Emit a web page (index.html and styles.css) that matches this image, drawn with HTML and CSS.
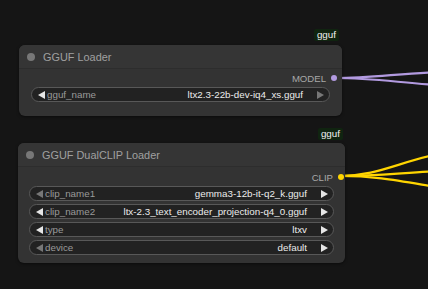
FILE: index.html
```html
<!DOCTYPE html>
<html lang="en">
<head>
    <meta charset="UTF-8">
    <title>Graph</title>
    <link rel="stylesheet" href="styles.css">
</head>
<body>
    <div class="canvas">
        <svg class="links" width="428" height="289" viewBox="0 0 428 289">
            <path class="link link-model" d="M335 78 C 370 78, 395 74, 430 72.5"/>
            <path class="link link-model" d="M335 78 C 370 78, 395 82, 430 84.5"/>
            <path class="link link-clip" d="M339 176 C 375 176, 395 164, 430 156"/>
            <path class="link link-clip" d="M339 176 C 375 176, 400 173, 430 171.5"/>
            <path class="link link-clip" d="M339 176 C 375 176, 395 180, 430 186"/>
        </svg>

        <div class="node node-loader">
            <div class="badge">gguf</div>
            <div class="node-title">
                <span class="title-dot"></span>
                <span>GGUF Loader</span>
            </div>
            <div class="node-body">
                <div class="output">
                    <span>MODEL</span>
                    <span class="slot slot-model"></span>
                </div>
                <div class="widget">
                    <span class="arrow left"></span>
                    <span class="label">gguf_name</span>
                    <span class="value">ltx2.3-22b-dev-iq4_xs.gguf</span>
                    <span class="arrow right dim"></span>
                </div>
            </div>
        </div>

        <div class="node node-clip">
            <div class="badge">gguf</div>
            <div class="node-title">
                <span class="title-dot"></span>
                <span>GGUF DualCLIP Loader</span>
            </div>
            <div class="node-body">
                <div class="output">
                    <span>CLIP</span>
                    <span class="slot slot-clip"></span>
                </div>
                <div class="widget">
                    <span class="arrow left dim"></span>
                    <span class="label">clip_name1</span>
                    <span class="value">gemma3-12b-it-q2_k.gguf</span>
                    <span class="arrow right"></span>
                </div>
                <div class="widget">
                    <span class="arrow left"></span>
                    <span class="label">clip_name2</span>
                    <span class="value">ltx-2.3_text_encoder_projection-q4_0.gguf</span>
                    <span class="arrow right"></span>
                </div>
                <div class="widget">
                    <span class="arrow left"></span>
                    <span class="label">type</span>
                    <span class="value">ltxv</span>
                    <span class="arrow right"></span>
                </div>
                <div class="widget">
                    <span class="arrow left dim"></span>
                    <span class="label">device</span>
                    <span class="value">default</span>
                    <span class="arrow right"></span>
                </div>
            </div>
        </div>
    </div>
</body>
</html>
```

FILE: styles.css
```css
body {
    margin: 0;
    background: #151515;
    font-family: "Liberation Sans", Arial, sans-serif;
}
.canvas {
    position: relative;
    width: 428px;
    height: 289px;
    overflow: hidden;
}
.links {
    position: absolute;
    left: 0;
    top: 0;
}
.link {
    fill: none;
    stroke-width: 2.2;
}
.link-model {
    stroke: #b29ae0;
}
.link-clip {
    stroke: #ffd500;
}
.node {
    position: absolute;
    background: #333;
    border-radius: 6px;
    display: flex;
    flex-direction: column;
    box-shadow: 0 1px 3px rgba(0, 0, 0, 0.5);
}
.node-loader {
    left: 19px;
    top: 45px;
    width: 323px;
    height: 71px;
}
.node-clip {
    left: 18px;
    top: 143px;
    width: 327px;
    height: 120px;
}
.badge {
    position: absolute;
    right: 3px;
    bottom: calc(100% + 4px);
    background: #102410;
    color: #f2f2f2;
    font-size: 9.8px;
    line-height: 12px;
    padding: 0 3px;
    border-radius: 2px;
}
.node-clip .badge {
    bottom: calc(100% + 3px);
    right: 2px;
}
.node-title {
    height: 23px;
    display: flex;
    align-items: center;
    gap: 8px;
    padding-left: 8px;
    color: #a0a0a0;
    font-size: 10.9px;
    background: #353535;
    border-radius: 6px 6px 0 0;
    border-bottom: 1px solid #2d2d2d;
}
.title-dot {
    width: 8px;
    height: 8px;
    border-radius: 50%;
    background: #777;
}
.node-body {
    display: flex;
    flex-direction: column;
    gap: 3px;
    padding: 2px 12px 0;
}
.node-clip .node-body {
    padding: 3px 11px 0;
}
.output {
    display: flex;
    justify-content: flex-end;
    align-items: center;
    gap: 5px;
    height: 14px;
    margin-right: -7px;
    margin-bottom: -1px;
    color: #a8a8a8;
    font-size: 9.6px;
}
.slot {
    width: 6px;
    height: 6px;
    border-radius: 50%;
}
.slot-model {
    background: #b29ae0;
}
.slot-clip {
    background: #ffd500;
    margin-right: -3px;
}
.widget {
    height: 13px;
    display: flex;
    align-items: center;
    border: 1px solid #585858;
    border-radius: 8px;
    background: #222;
    padding: 0 5px 0 6px;
    font-size: 9.8px;
    white-space: nowrap;
}
.label {
    color: #9a9a9a;
    margin-left: 2px;
}
.value {
    flex: 1;
    text-align: right;
    color: #ececec;
    margin-right: 14px;
}
.arrow {
    width: 0;
    height: 0;
    border-top: 4px solid transparent;
    border-bottom: 4px solid transparent;
}
.arrow.left {
    border-right: 7px solid #e6e6e6;
}
.arrow.right {
    border-left: 7px solid #e6e6e6;
}
.arrow.left.dim {
    border-right-color: #777;
}
.arrow.right.dim {
    border-left-color: #777;
}
```
